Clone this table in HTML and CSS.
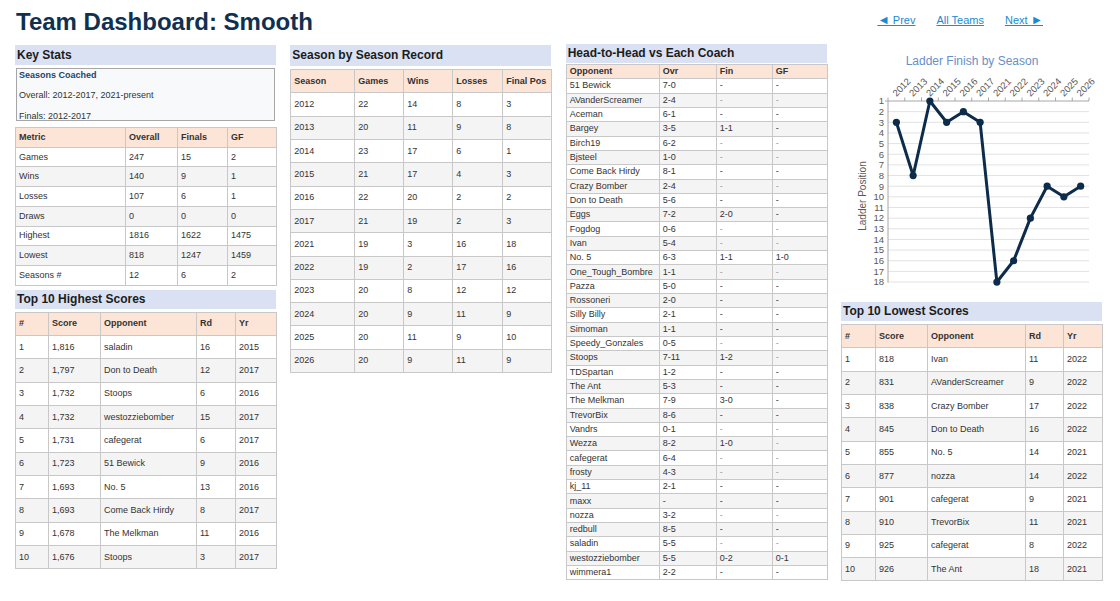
FILE: index.html
```html
<!DOCTYPE html>
<html lang="en">
<head>
<meta charset="utf-8">
<title>Team Dashboard: Smooth</title>
<link rel="stylesheet" href="styles.css">
</head>
<body>
<div class="page">
  <header class="top">
    <h1 class="title">Team Dashboard: Smooth</h1>
    <nav class="nav">
      <a href="#"><span class="arr">&#9668;</span> Prev</a>
      <a href="#">All Teams</a>
      <a href="#">Next <span class="arr">&#9658;</span></a>
    </nav>
  </header>

  <main class="grid">
    <!-- Column 1 -->
    <section class="col">
      <div class="sec">Key Stats</div>
      <div class="coached">
        <div class="coached-title">Seasons Coached</div>
        <div>Overall: 2012-2017, 2021-present</div>
        <div>Finals: 2012-2017</div>
      </div>
      <table class="tbl pad-m metric">
        <colgroup><col class="w110"><col class="w52"><col class="w50"><col class="w49"></colgroup>
        <thead><tr><th>Metric</th><th>Overall</th><th>Finals</th><th>GF</th></tr></thead>
        <tbody>
          <tr><td>Games</td><td>247</td><td>15</td><td>2</td></tr>
          <tr><td>Wins</td><td>140</td><td>9</td><td>1</td></tr>
          <tr><td>Losses</td><td>107</td><td>6</td><td>1</td></tr>
          <tr><td>Draws</td><td>0</td><td>0</td><td>0</td></tr>
          <tr><td>Highest</td><td>1816</td><td>1622</td><td>1475</td></tr>
          <tr><td>Lowest</td><td>818</td><td>1247</td><td>1459</td></tr>
          <tr><td>Seasons #</td><td>12</td><td>6</td><td>2</td></tr>
        </tbody>
      </table>

      <div class="sec sec-tight sec-gap">Top 10 Highest Scores</div>
      <table class="tbl pad-l">
        <colgroup><col class="w33"><col class="w52"><col class="w96"><col class="w39"><col class="w41"></colgroup>
        <thead><tr><th>#</th><th>Score</th><th>Opponent</th><th>Rd</th><th>Yr</th></tr></thead>
        <tbody>
          <tr><td>1</td><td>1,816</td><td>saladin</td><td>16</td><td>2015</td></tr>
          <tr><td>2</td><td>1,797</td><td>Don to Death</td><td>12</td><td>2017</td></tr>
          <tr><td>3</td><td>1,732</td><td>Stoops</td><td>6</td><td>2016</td></tr>
          <tr><td>4</td><td>1,732</td><td>westozziebomber</td><td>15</td><td>2017</td></tr>
          <tr><td>5</td><td>1,731</td><td>cafegerat</td><td>6</td><td>2017</td></tr>
          <tr><td>6</td><td>1,723</td><td>51 Bewick</td><td>9</td><td>2016</td></tr>
          <tr><td>7</td><td>1,693</td><td>No. 5</td><td>13</td><td>2016</td></tr>
          <tr><td>8</td><td>1,693</td><td>Come Back Hirdy</td><td>8</td><td>2017</td></tr>
          <tr><td>9</td><td>1,678</td><td>The Melkman</td><td>11</td><td>2016</td></tr>
          <tr><td>10</td><td>1,676</td><td>Stoops</td><td>3</td><td>2017</td></tr>
        </tbody>
      </table>
    </section>

    <!-- Column 2 -->
    <section class="col">
      <div class="sec sec-season">Season by Season Record</div>
      <table class="tbl pad-l">
        <colgroup><col class="w64"><col class="w49"><col class="w49"><col class="w50"><col class="w49"></colgroup>
        <thead><tr><th>Season</th><th>Games</th><th>Wins</th><th>Losses</th><th>Final Pos</th></tr></thead>
        <tbody>
          <tr><td>2012</td><td>22</td><td>14</td><td>8</td><td>3</td></tr>
          <tr><td>2013</td><td>20</td><td>11</td><td>9</td><td>8</td></tr>
          <tr><td>2014</td><td>23</td><td>17</td><td>6</td><td>1</td></tr>
          <tr><td>2015</td><td>21</td><td>17</td><td>4</td><td>3</td></tr>
          <tr><td>2016</td><td>22</td><td>20</td><td>2</td><td>2</td></tr>
          <tr><td>2017</td><td>21</td><td>19</td><td>2</td><td>3</td></tr>
          <tr><td>2021</td><td>19</td><td>3</td><td>16</td><td>18</td></tr>
          <tr><td>2022</td><td>19</td><td>2</td><td>17</td><td>16</td></tr>
          <tr><td>2023</td><td>20</td><td>8</td><td>12</td><td>12</td></tr>
          <tr><td>2024</td><td>20</td><td>9</td><td>11</td><td>9</td></tr>
          <tr><td>2025</td><td>20</td><td>11</td><td>9</td><td>10</td></tr>
          <tr><td>2026</td><td>20</td><td>9</td><td>11</td><td>9</td></tr>
        </tbody>
      </table>
    </section>

    <!-- Column 3 -->
    <section class="col col-h2h">
      <div class="sec sec-tight sec-h2h">Head-to-Head vs Each Coach</div>
      <table class="tbl pad-s">
        <colgroup><col class="w93"><col class="w57"><col class="w56"><col class="w55"></colgroup>
        <thead><tr><th>Opponent</th><th>Ovr</th><th>Fin</th><th>GF</th></tr></thead>
        <tbody>
          <tr><td>51 Bewick</td><td>7-0</td><td>-</td><td>-</td></tr>
          <tr><td>AVanderScreamer</td><td>2-4</td><td class="dim">-</td><td class="dim">-</td></tr>
          <tr><td>Aceman</td><td>6-1</td><td>-</td><td>-</td></tr>
          <tr><td>Bargey</td><td>3-5</td><td>1-1</td><td>-</td></tr>
          <tr><td>Birch19</td><td>6-2</td><td class="dim">-</td><td class="dim">-</td></tr>
          <tr><td>Bjsteel</td><td>1-0</td><td class="dim">-</td><td class="dim">-</td></tr>
          <tr><td>Come Back Hirdy</td><td>8-1</td><td>-</td><td>-</td></tr>
          <tr><td>Crazy Bomber</td><td>2-4</td><td class="dim">-</td><td class="dim">-</td></tr>
          <tr><td>Don to Death</td><td>5-6</td><td>-</td><td>-</td></tr>
          <tr><td>Eggs</td><td>7-2</td><td>2-0</td><td>-</td></tr>
          <tr><td>Fogdog</td><td>0-6</td><td class="dim">-</td><td class="dim">-</td></tr>
          <tr><td>Ivan</td><td>5-4</td><td class="dim">-</td><td class="dim">-</td></tr>
          <tr><td>No. 5</td><td>6-3</td><td>1-1</td><td>1-0</td></tr>
          <tr><td>One_Tough_Bombre</td><td>1-1</td><td class="dim">-</td><td class="dim">-</td></tr>
          <tr><td>Pazza</td><td>5-0</td><td>-</td><td>-</td></tr>
          <tr><td>Rossoneri</td><td>2-0</td><td>-</td><td>-</td></tr>
          <tr><td>Silly Billy</td><td>2-1</td><td>-</td><td>-</td></tr>
          <tr><td>Simoman</td><td>1-1</td><td>-</td><td>-</td></tr>
          <tr><td>Speedy_Gonzales</td><td>0-5</td><td class="dim">-</td><td class="dim">-</td></tr>
          <tr><td>Stoops</td><td>7-11</td><td>1-2</td><td class="dim">-</td></tr>
          <tr><td>TDSpartan</td><td>1-2</td><td>-</td><td>-</td></tr>
          <tr><td>The Ant</td><td>5-3</td><td>-</td><td>-</td></tr>
          <tr><td>The Melkman</td><td>7-9</td><td>3-0</td><td>-</td></tr>
          <tr><td>TrevorBix</td><td>8-6</td><td>-</td><td>-</td></tr>
          <tr><td>Vandrs</td><td>0-1</td><td class="dim">-</td><td class="dim">-</td></tr>
          <tr><td>Wezza</td><td>8-2</td><td>1-0</td><td class="dim">-</td></tr>
          <tr><td>cafegerat</td><td>6-4</td><td class="dim">-</td><td class="dim">-</td></tr>
          <tr><td>frosty</td><td>4-3</td><td class="dim">-</td><td class="dim">-</td></tr>
          <tr><td>kj_11</td><td>2-1</td><td>-</td><td>-</td></tr>
          <tr><td>maxx</td><td>-</td><td>-</td><td>-</td></tr>
          <tr><td>nozza</td><td>3-2</td><td class="dim">-</td><td class="dim">-</td></tr>
          <tr><td>redbull</td><td>8-5</td><td>-</td><td>-</td></tr>
          <tr><td>saladin</td><td>5-5</td><td class="dim">-</td><td class="dim">-</td></tr>
          <tr><td>westozziebomber</td><td>5-5</td><td>0-2</td><td>0-1</td></tr>
          <tr><td>wimmera1</td><td>2-2</td><td>-</td><td>-</td></tr>
        </tbody>
      </table>
    </section>

    <!-- Column 4 -->
    <section class="col">
      <svg class="chart" width="261" height="257" viewBox="0 0 261 257" xmlns="http://www.w3.org/2000/svg">
        <text class="ch-title" x="131" y="20" text-anchor="middle">Ladder Finish by Season</text>
        <g class="grid-lines">
          <line x1="47" x2="248" y1="66.65" y2="66.65"/>
          <line x1="47" x2="248" y1="77.3" y2="77.3"/>
          <line x1="47" x2="248" y1="87.95" y2="87.95"/>
          <line x1="47" x2="248" y1="98.6" y2="98.6"/>
          <line x1="47" x2="248" y1="109.25" y2="109.25"/>
          <line x1="47" x2="248" y1="119.9" y2="119.9"/>
          <line x1="47" x2="248" y1="130.55" y2="130.55"/>
          <line x1="47" x2="248" y1="141.2" y2="141.2"/>
          <line x1="47" x2="248" y1="151.85" y2="151.85"/>
          <line x1="47" x2="248" y1="162.5" y2="162.5"/>
          <line x1="47" x2="248" y1="173.15" y2="173.15"/>
          <line x1="47" x2="248" y1="183.8" y2="183.8"/>
          <line x1="47" x2="248" y1="194.45" y2="194.45"/>
          <line x1="47" x2="248" y1="205.1" y2="205.1"/>
          <line x1="47" x2="248" y1="215.75" y2="215.75"/>
          <line x1="47" x2="248" y1="226.4" y2="226.4"/>
          <line x1="47" x2="248" y1="237.05" y2="237.05"/>
        </g>
        <g class="axis">
          <line x1="47" x2="248" y1="56" y2="56"/>
          <line x1="47" x2="47" y1="56" y2="237.5"/>
          <line x1="44" x2="47" y1="56" y2="56"/>
          <line x1="47" x2="47" y1="52.5" y2="56"/>
          <line x1="63.75" x2="63.75" y1="52.5" y2="56"/>
          <line x1="80.5" x2="80.5" y1="52.5" y2="56"/>
          <line x1="97.25" x2="97.25" y1="52.5" y2="56"/>
          <line x1="114" x2="114" y1="52.5" y2="56"/>
          <line x1="130.75" x2="130.75" y1="52.5" y2="56"/>
          <line x1="147.5" x2="147.5" y1="52.5" y2="56"/>
          <line x1="164.25" x2="164.25" y1="52.5" y2="56"/>
          <line x1="181" x2="181" y1="52.5" y2="56"/>
          <line x1="197.75" x2="197.75" y1="52.5" y2="56"/>
          <line x1="214.5" x2="214.5" y1="52.5" y2="56"/>
          <line x1="231.25" x2="231.25" y1="52.5" y2="56"/>
          <line x1="248" x2="248" y1="52.5" y2="56"/>
        </g>
        <g class="ylab" text-anchor="end">
          <text x="43" y="59.3">1</text>
          <text x="43" y="69.95">2</text>
          <text x="43" y="80.6">3</text>
          <text x="43" y="91.25">4</text>
          <text x="43" y="101.9">5</text>
          <text x="43" y="112.55">6</text>
          <text x="43" y="123.2">7</text>
          <text x="43" y="133.85">8</text>
          <text x="43" y="144.5">9</text>
          <text x="43" y="155.15">10</text>
          <text x="43" y="165.8">11</text>
          <text x="43" y="176.45">12</text>
          <text x="43" y="187.1">13</text>
          <text x="43" y="197.75">14</text>
          <text x="43" y="208.4">15</text>
          <text x="43" y="219.05">16</text>
          <text x="43" y="229.7">17</text>
          <text x="43" y="240.35">18</text>
        </g>
        <g class="xlab">
          <text transform="translate(55.4 52) rotate(-45)">2012</text>
          <text transform="translate(72.1 52) rotate(-45)">2013</text>
          <text transform="translate(88.9 52) rotate(-45)">2014</text>
          <text transform="translate(105.6 52) rotate(-45)">2015</text>
          <text transform="translate(122.4 52) rotate(-45)">2016</text>
          <text transform="translate(139.1 52) rotate(-45)">2017</text>
          <text transform="translate(155.9 52) rotate(-45)">2021</text>
          <text transform="translate(172.6 52) rotate(-45)">2022</text>
          <text transform="translate(189.4 52) rotate(-45)">2023</text>
          <text transform="translate(206.1 52) rotate(-45)">2024</text>
          <text transform="translate(222.9 52) rotate(-45)">2025</text>
          <text transform="translate(239.6 52) rotate(-45)">2026</text>
        </g>
        <text class="ytitle" transform="translate(25 151) rotate(-90)" text-anchor="middle">Ladder Position</text>
        <polyline class="series" points="55.38,77.3 72.13,130.55 88.88,56 105.63,77.3 122.38,66.65 139.13,77.3 155.88,237.05 172.63,215.75 189.38,173.15 206.13,141.2 222.88,151.85 239.63,141.2"/>
        <g class="dots">
          <circle cx="55.38" cy="77.3" r="3.6"/>
          <circle cx="72.13" cy="130.55" r="3.6"/>
          <circle cx="88.88" cy="56" r="3.6"/>
          <circle cx="105.63" cy="77.3" r="3.6"/>
          <circle cx="122.38" cy="66.65" r="3.6"/>
          <circle cx="139.13" cy="77.3" r="3.6"/>
          <circle cx="155.88" cy="237.05" r="3.6"/>
          <circle cx="172.63" cy="215.75" r="3.6"/>
          <circle cx="189.38" cy="173.15" r="3.6"/>
          <circle cx="206.13" cy="141.2" r="3.6"/>
          <circle cx="222.88" cy="151.85" r="3.6"/>
          <circle cx="239.63" cy="141.2" r="3.6"/>
        </g>
      </svg>

      <div class="sec sec-tight">Top 10 Lowest Scores</div>
      <table class="tbl pad-l">
        <colgroup><col class="w34"><col class="w52"><col class="w98"><col class="w38"><col class="w39"></colgroup>
        <thead><tr><th>#</th><th>Score</th><th>Opponent</th><th>Rd</th><th>Yr</th></tr></thead>
        <tbody>
          <tr><td>1</td><td>818</td><td>Ivan</td><td>11</td><td>2022</td></tr>
          <tr><td>2</td><td>831</td><td>AVanderScreamer</td><td>9</td><td>2022</td></tr>
          <tr><td>3</td><td>838</td><td>Crazy Bomber</td><td>17</td><td>2022</td></tr>
          <tr><td>4</td><td>845</td><td>Don to Death</td><td>16</td><td>2022</td></tr>
          <tr><td>5</td><td>855</td><td>No. 5</td><td>14</td><td>2021</td></tr>
          <tr><td>6</td><td>877</td><td>nozza</td><td>14</td><td>2022</td></tr>
          <tr><td>7</td><td>901</td><td>cafegerat</td><td>9</td><td>2021</td></tr>
          <tr><td>8</td><td>910</td><td>TrevorBix</td><td>11</td><td>2021</td></tr>
          <tr><td>9</td><td>925</td><td>cafegerat</td><td>8</td><td>2022</td></tr>
          <tr><td>10</td><td>926</td><td>The Ant</td><td>18</td><td>2021</td></tr>
        </tbody>
      </table>
    </section>
  </main>
</div>
</body>
</html>
```

FILE: styles.css
```css
html, body {
  margin: 0;
  padding: 0;
  background: #ffffff;
}

body {
  font-family: "Liberation Sans", Arial, sans-serif;
  color: #333333;
}

.page {
  padding: 8px 0 0 15px;
}

.top {
  display: flex;
  align-items: flex-start;
  justify-content: space-between;
  padding-right: 77px;
}

.title {
  margin: 0;
  font-size: 24px;
  line-height: 28px;
  font-weight: bold;
  color: #10304f;
  padding-left: 1px;
}

.nav {
  display: flex;
  gap: 21px;
  margin-top: 6px;
  font-size: 11px;
  line-height: 13px;
}

.nav a {
  color: #1b8ad3;
  text-decoration: underline;
}

.arr {
  font-family: "Liberation Sans", Arial, sans-serif;
  font-size: 12.5px;
  line-height: 13px;
}

.grid {
  display: grid;
  grid-template-columns: repeat(4, 261px);
  column-gap: 14.33px;
  margin-top: 9px;
  align-items: start;
}

.col {
  display: flex;
  flex-direction: column;
}

.sec {
  background: #d9e1f2;
  height: 20px;
  line-height: 20px;
  font-size: 12px;
  font-weight: bold;
  color: #1c1c1c;
  padding-left: 2px;
  margin-bottom: 3px;
}

.sec-season {
  height: 21px;
  line-height: 21px;
}

.sec-tight {
  height: 19px;
  line-height: 19px;
}

.sec-gap {
  margin-top: 4px;
}

.sec-h2h {
  margin-top: -1px;
  margin-bottom: 1px;
}

.coached {
  box-sizing: border-box;
  height: 53px;
  border: 1px solid #a6a6a6;
  background: #f8f9fb;
  padding: 0.5px 2px 0;
  margin: 0 1px 6px 1px;
  display: flex;
  flex-direction: column;
  gap: 9.5px;
  font-size: 9px;
  line-height: 11px;
  color: #333333;
}

.coached-title {
  font-weight: bold;
  color: #1d4470;
}

.tbl {
  width: 261px;
  border-collapse: collapse;
  table-layout: fixed;
  font-size: 9px;
  line-height: 11px;
  color: #333333;
}

.tbl th,
.tbl td {
  border: 1px solid #c8c8c8;
  text-align: left;
  white-space: nowrap;
  overflow: hidden;
  padding-left: 3px;
  padding-right: 2px;
}

.tbl th {
  background: #fce4d6;
  font-weight: bold;
  color: #333333;
}

.tbl tbody tr:nth-child(even) td {
  background: #f4f4f4;
}

.tbl td.dim {
  color: #9a9a9a;
}

.pad-l th, .pad-l td {
  padding-top: 5.67px;
  padding-bottom: 5.67px;
}

.pad-m th, .pad-m td {
  padding-top: 3.87px;
  padding-bottom: 3.87px;
}

.pad-s th, .pad-s td {
  padding-top: 1.17px;
  padding-bottom: 1.17px;
}

.w33 { width: 33px; }
.w34 { width: 34px; }
.w38 { width: 38px; }
.w39 { width: 39px; }
.w41 { width: 41px; }
.w49 { width: 49px; }
.w50 { width: 50px; }
.w52 { width: 52px; }
.w55 { width: 55px; }
.w56 { width: 56px; }
.w57 { width: 57px; }
.w64 { width: 64px; }
.w93 { width: 93px; }
.w96 { width: 96px; }
.w98 { width: 98px; }
.w110 { width: 110px; }

.chart {
  display: block;
  font-family: "Liberation Sans", Arial, sans-serif;
}

.ch-title {
  font-size: 12px;
  fill: #6690c6;
}

.grid-lines line {
  stroke: #e2e2e2;
  stroke-width: 1;
}

.axis line {
  stroke: #a6a6a6;
  stroke-width: 1;
}

.ylab text,
.xlab text {
  font-size: 9.5px;
  fill: #595959;
}

.ytitle {
  font-size: 10px;
  fill: #595959;
}

.series {
  fill: none;
  stroke: #0d2b4a;
  stroke-width: 3;
  stroke-linejoin: round;
}

.dots circle {
  fill: #0d2b4a;
}
```
